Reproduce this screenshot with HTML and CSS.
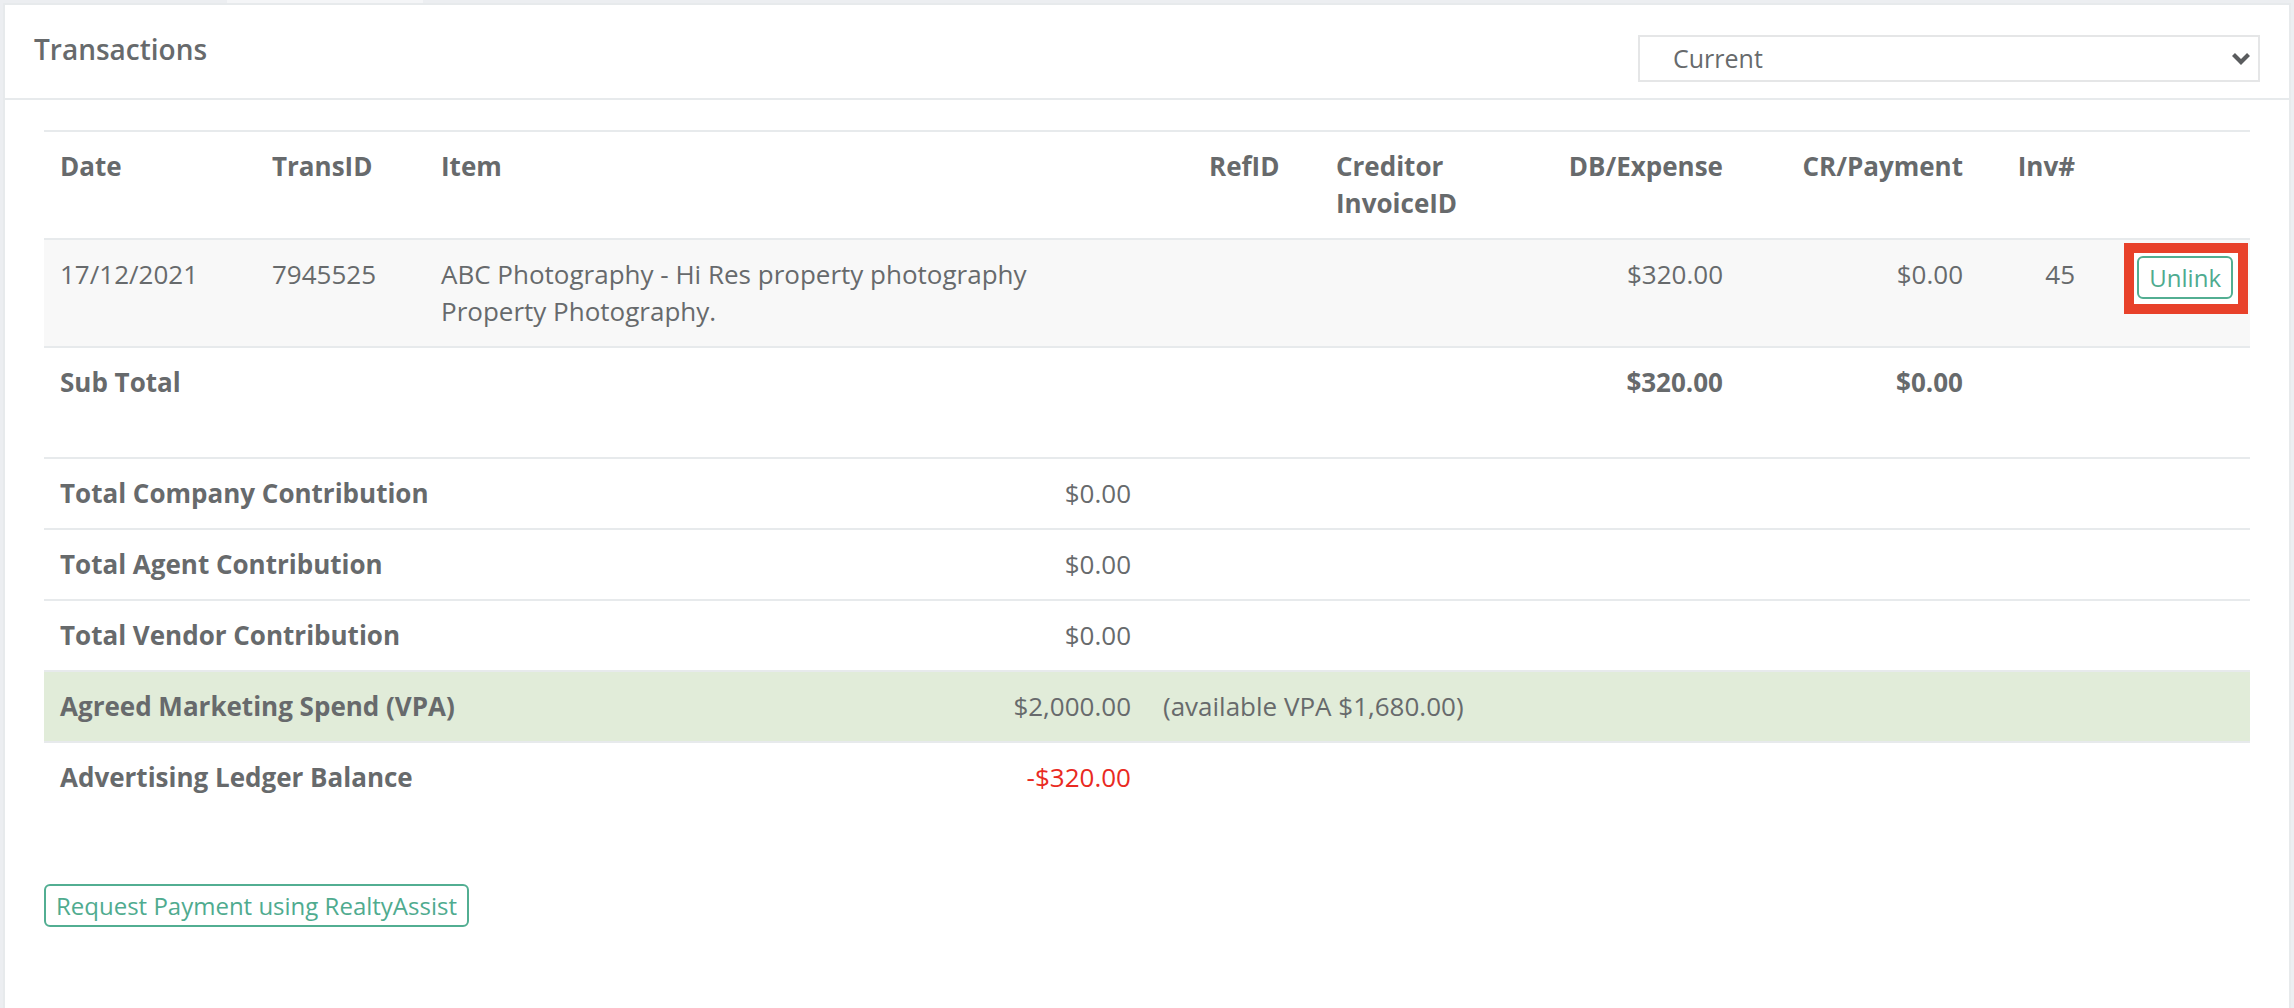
FILE: index.html
```html
<!DOCTYPE html>
<html lang="en">
<head>
<meta charset="utf-8">
<title>Transactions</title>
<link rel="stylesheet" href="styles.css">
</head>
<body>
<div class="tab-strip"><span class="tab-edge"></span></div>
<section class="ibox">
  <header class="ibox-title">
    <h5>Transactions</h5>
    <div class="select">
      <span class="select-value">Current</span>
      <svg class="chevron" width="20" height="14" viewBox="0 0 20 14" aria-hidden="true">
        <polyline points="2.5,2.5 10,10 17.5,2.5" fill="none" stroke="#5a5c5e" stroke-width="4.2" stroke-linecap="butt" stroke-linejoin="miter"/>
      </svg>
    </div>
  </header>
  <div class="ibox-content">
    <table class="table tx-table">
      <colgroup>
        <col class="c-date"><col class="c-trans"><col class="c-item"><col class="c-ref">
        <col class="c-cred"><col class="c-db"><col class="c-cr"><col class="c-inv"><col class="c-act">
      </colgroup>
      <thead>
        <tr>
          <th>Date</th>
          <th>TransID</th>
          <th>Item</th>
          <th>RefID</th>
          <th>Creditor InvoiceID</th>
          <th class="num">DB/Expense</th>
          <th class="num">CR/Payment</th>
          <th class="num">Inv#</th>
          <th></th>
        </tr>
      </thead>
      <tbody>
        <tr class="striped">
          <td>17/12/2021</td>
          <td>7945525</td>
          <td>ABC Photography - Hi Res property photography<br>Property Photography.</td>
          <td></td>
          <td></td>
          <td class="num">$320.00</td>
          <td class="num">$0.00</td>
          <td class="num">45</td>
          <td class="act"><span class="highlight"><button class="btn-outline">Unlink</button></span></td>
        </tr>
        <tr class="subtotal">
          <td>Sub Total</td>
          <td></td><td></td><td></td><td></td>
          <td class="num">$320.00</td>
          <td class="num">$0.00</td>
          <td></td><td></td>
        </tr>
      </tbody>
    </table>

    <table class="table sum-table">
      <colgroup><col class="s-label"><col class="s-val"><col class="s-note"></colgroup>
      <tbody>
        <tr><th>Total Company Contribution</th><td class="num">$0.00</td><td></td></tr>
        <tr><th>Total Agent Contribution</th><td class="num">$0.00</td><td></td></tr>
        <tr><th>Total Vendor Contribution</th><td class="num">$0.00</td><td></td></tr>
        <tr class="success"><th>Agreed Marketing Spend (VPA)</th><td class="num">$2,000.00</td><td>(available VPA $1,680.00)</td></tr>
        <tr><th>Advertising Ledger Balance</th><td class="num negative">-$320.00</td><td></td></tr>
      </tbody>
    </table>

    <div class="actions">
      <button class="btn-outline">Request Payment using RealtyAssist</button>
    </div>
  </div>
</section>
</body>
</html>
```
FILE: styles.css
```css
* { box-sizing: border-box; }

html, body {
  margin: 0;
  padding: 0;
  background: #eceef1;
  height: 100%;
}

body {
  padding: 0 3px;
  font-family: "Open Sans", "Noto Sans", "Liberation Sans", sans-serif;
  font-size: 26px;
  line-height: 37px;
  color: #676a6c;
  overflow: hidden;
}

.tab-strip {
  height: 3px;
  display: flex;
}

.tab-edge {
  margin-left: 224px;
  width: 196px;
  height: 3px;
  background: #f4f5f7;
}

.ibox {
  background: #fff;
  border: 2px solid #e7eaec;
  border-bottom: none;
  min-height: 1005px;
}

.ibox-title {
  display: flex;
  justify-content: space-between;
  align-items: flex-start;
  height: 95px;
  padding: 30px 29px 0 29px;
  border-bottom: 2px solid #e7eaec;
}

.ibox-title h5 {
  margin: 0;
  font-size: 28px;
  line-height: 29px;
  font-weight: 600;
  color: #676a6c;
}

.select {
  width: 622px;
  height: 47px;
  border: 2px solid #e5e6e7;
  display: flex;
  align-items: center;
  justify-content: space-between;
  padding: 0 7px 0 33px;
  background: #fff;
}

.select-value {
  font-size: 25px;
  line-height: 43px;
  color: #676a6c;
}

.chevron {
  display: block;
}

.ibox-content {
  padding: 30px 39px 0 39px;
}

.table {
  width: 100%;
  border-collapse: collapse;
  table-layout: fixed;
  margin-bottom: 40px;
}

.table th,
.table td {
  padding: 16px;
  vertical-align: top;
  text-align: left;
  border-top: 2px solid #e7eaec;
  line-height: 37px;
}

.table th { font-weight: 700; }

.tx-table tbody tr.subtotal td { font-weight: 700; }

.table .num { text-align: right; }

.c-date { width: 212px; }
.c-trans { width: 169px; }
.c-item { width: 768px; }
.c-ref { width: 127px; }
.c-cred { width: 160px; }
.c-db { width: 259px; }
.c-cr { width: 240px; }
.c-inv { width: 112px; }
.c-act { width: 159px; }

.tx-table tr.striped td { background: #f8f8f8; }

.table td.act { text-align: right; }

.highlight {
  position: relative;
  display: inline-block;
  vertical-align: top;
  isolation: isolate;
  line-height: 0;
  margin-right: 1px;
}

.highlight::before {
  content: "";
  position: absolute;
  left: -13px;
  top: -13px;
  right: -15px;
  bottom: -15px;
  border: 10px solid #e8412a;
  background: #fff;
  z-index: -1;
}

.btn-outline {
  display: inline-block;
  font-family: "Open Sans", "Noto Sans", "Liberation Sans", sans-serif;
  font-size: 24px;
  line-height: 37px;
  padding: 1px 10px;
  border: 2px solid #52ae92;
  border-radius: 6px;
  background: #fff;
  color: #4fab8f;
  font-weight: 400;
  cursor: pointer;
  vertical-align: top;
}

.s-label { width: 756px; }
.s-val { width: 347px; }

.sum-table tr.success th,
.sum-table tr.success td { background: #e1ecd9; }

.negative { color: #e92a22; }

.actions {
  padding-top: 32px;
}
```
